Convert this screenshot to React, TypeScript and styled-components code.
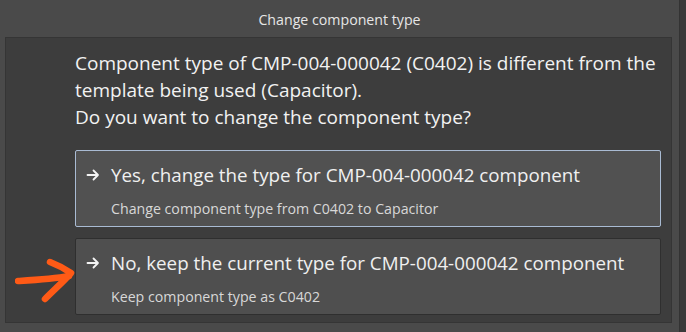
import styled, { createGlobalStyle } from "styled-components";

const GlobalStyle = createGlobalStyle`
    html, body {
        margin: 0;
        padding: 0;
        background: #4a4a4a;
    }
    body {
        font-family: "Open Sans", "Noto Sans", "Liberation Sans", sans-serif;
        color: #f2f2f2;
    }
`

const options = [
    {
        title: "Yes, change the type for CMP-004-000042 component",
        hint: "Change component type from C0402 to Capacitor",
        active: true,
    },
    {
        title: "No, keep the current type for CMP-004-000042 component",
        hint: "Keep component type as C0402",
        active: false,
    },
]

const ArrowIcon = () => (
    <svg width="14" height="14" viewBox="0 0 14 14" fill="none">
        <path d="M1.5 7h10.5M7.5 2.5L12 7l-4.5 4.5" stroke="#f4f4f4" strokeWidth="1.8" strokeLinecap="round" strokeLinejoin="round" />
    </svg>
)

const App = () => {
    return (
        <>
            <GlobalStyle />
            <Window>
                <Main>
                    <TitleBar>Change component type</TitleBar>
                    <Body>
                        <Panel>
                            <Message>
                                Component type of CMP-004-000042 (C0402) is different from the
                                <br />
                                template being used (Capacitor).
                                <br />
                                Do you want to change the component type?
                            </Message>
                            <OptionList>
                                {options.map((o) => (
                                    <Option key={o.title} $active={o.active}>
                                        <OptionHead>
                                            <ArrowIcon />
                                            <span>{o.title}</span>
                                        </OptionHead>
                                        <OptionHint>{o.hint}</OptionHint>
                                    </Option>
                                ))}
                            </OptionList>
                            <Pointer width="64" height="52" viewBox="0 0 64 52">
                                <path d="M3 27 C20 26 38 25 54 22" stroke="#ff5a16" strokeWidth="6.5" strokeLinecap="round" fill="none" />
                                <path d="M35 8 C43 11 50 15 56 19 C49 27 40 35 30 45" stroke="#ff5a16" strokeWidth="6.5" strokeLinecap="round" strokeLinejoin="round" fill="none" />
                            </Pointer>
                        </Panel>
                    </Body>
                </Main>
                <ScrollStrip />
            </Window>
        </>
    )
}

const Window = styled.div`
    width: 686px;
    height: 332px;
    display: flex;
    background: #4a4a4a;
    overflow: hidden;
`

const Main = styled.div`
    width: 680px;
    display: flex;
    flex-direction: column;
`

const TitleBar = styled.div`
    height: 37px;
    display: flex;
    align-items: center;
    justify-content: center;
    padding-top: 1px;
    box-sizing: border-box;
    font-size: 14.2px;
    color: #e6e6e6;
`

const Body = styled.div`
    display: flex;
    padding-left: 5px;
    height: 286px;
`

const Panel = styled.div`
    position: relative;
    width: 667px;
    box-sizing: border-box;
    background: #3d3d3d;
    border: 1px solid #353535;
    padding: 12px 10px 0 69px;
`

const ScrollStrip = styled.div`
    width: 6px;
    background: #3a3a3a;
    border-left: 1px solid #333;
`

const Message = styled.p`
    margin: 0;
    font-size: 19px;
    line-height: 27px;
    color: #f2f2f2;
`

const OptionList = styled.div`
    margin-top: 19px;
    display: flex;
    flex-direction: column;
    gap: 11px;
`

const Option = styled.div<{ $active: boolean }>`
    height: 77px;
    box-sizing: border-box;
    border-radius: 2px;
    border: 1px solid ${({ $active }) => ($active ? "#a9bbd3" : "#2f2f2f")};
    background: ${({ $active }) => ($active ? "#515151" : "#4f4f4f")};
    padding: 11px 10px 0 10px;
`

const OptionHead = styled.div`
    display: flex;
    align-items: center;
    gap: 11px;
    font-size: 18.8px;
    line-height: 26px;
    color: #f0f0f0;
`

const OptionHint = styled.div`
    margin-top: 12px;
    padding-left: 25px;
    font-size: 14.2px;
    line-height: 18px;
    color: #d8d8d8;
`

const Pointer = styled.svg`
    position: absolute;
    left: 9px;
    top: 216px;
`

export default App;
